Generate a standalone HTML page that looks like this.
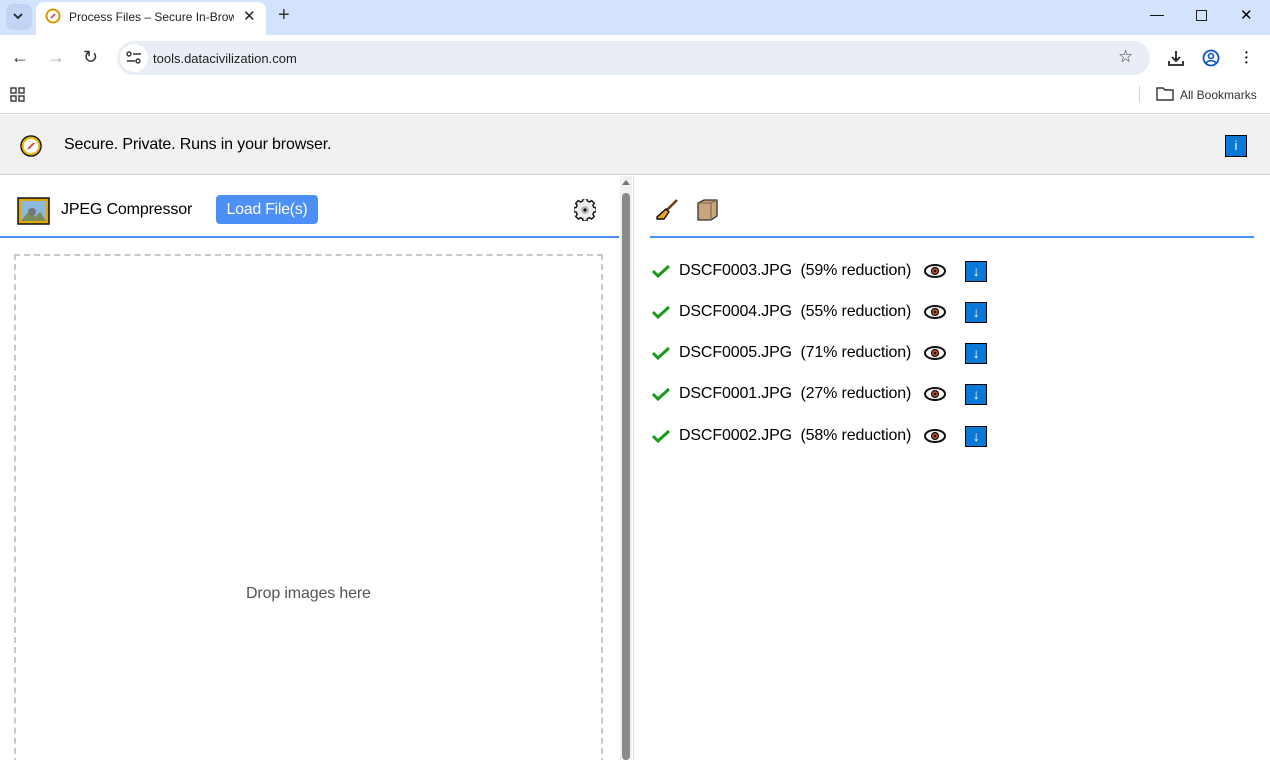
<!DOCTYPE html>
<html><head><meta charset="utf-8"><style>
*{box-sizing:border-box;margin:0;padding:0}
html,body{width:1270px;height:760px;overflow:hidden}
body{font-family:"Liberation Sans",Arial,sans-serif;background:#fff;position:relative}
.abs{position:absolute}
.tabbar{left:0;top:0;width:1270px;height:35px;background:#d3e3fd}
.tab{left:36px;top:2px;width:230px;height:33px;background:#fff;border-radius:8px 8px 0 0}
.toolbar{left:0;top:35px;width:1270px;height:45px;background:#fff}
.omni{left:117px;top:41px;width:1033px;height:34px;background:#e9eef6;border-radius:17px}
.bm{left:0;top:80px;width:1270px;height:34px;background:#fff;border-bottom:1px solid #d6d6d6}
.banner{left:0;top:115px;width:1270px;height:60px;background:#f1f1f1;border-bottom:1px solid #cfcfcf}
.fl{font-size:16px;color:#000}
.row{left:652px;height:24px;display:flex;align-items:center;font-size:16px;letter-spacing:-0.15px}
.dl{width:22px;height:21px;background:#0a78d7;border:1.5px solid #000;color:#fff;font-size:14px;text-align:center;line-height:18px;font-weight:bold}
</style></head><body>
<div class="abs tabbar"></div>
<div class="abs" style="left:6px;top:4px;width:26px;height:26px;background:#c2d4f3;border-radius:7px"></div>
<svg class="abs" style="left:12px;top:10px" width="12" height="12"><path d="M2 4l4 4 4-4" fill="none" stroke="#222" stroke-width="1.8"/></svg>
<div class="abs tab"></div>
<svg class="abs" style="left:45px;top:8px" width="16" height="16"><circle cx="8" cy="8" r="6.5" fill="#fff" stroke="#d49b00" stroke-width="2"/><path d="M6 10l4-4" stroke="#c33" stroke-width="1.5"/></svg>
<div class="abs" style="left:69px;top:10px;font-size:12px;color:#222;width:165px;overflow:hidden;white-space:nowrap">Process Files – Secure In-Browse</div>
<div class="abs" style="left:243px;top:7px;font-size:15px;color:#222">✕</div>
<div class="abs" style="left:278px;top:4px;font-size:20px;color:#333">+</div>
<div class="abs" style="left:1150px;top:6px;font-size:14px">—</div>
<div class="abs" style="left:1196px;top:10px;width:11px;height:11px;border:1.3px solid #222"></div>
<div class="abs" style="left:1240px;top:6px;font-size:15px">✕</div>
<div class="abs toolbar"></div>
<div class="abs" style="left:11px;top:47px;font-size:18px;color:#333">←</div>
<div class="abs" style="left:47px;top:47px;font-size:18px;color:#aaa">→</div>
<div class="abs" style="left:83px;top:47px;font-size:18px;color:#333">↻</div>
<div class="abs omni"></div>
<div class="abs" style="left:120px;top:44px;width:28px;height:28px;background:#fff;border-radius:14px"></div>
<svg class="abs" style="left:126px;top:51px" width="16" height="14"><circle cx="3" cy="3" r="2" fill="none" stroke="#333" stroke-width="1.4"/><path d="M7 3h8M1 10h8" stroke="#333" stroke-width="1.4"/><circle cx="12" cy="10" r="2" fill="none" stroke="#333" stroke-width="1.4"/></svg>
<div class="abs" style="left:153px;top:51px;font-size:13px;color:#1f1f1f">tools.datacivilization.com</div>
<div class="abs" style="left:1118px;top:47px;font-size:17px;color:#333">☆</div>
<svg class="abs" style="left:1167px;top:49px" width="18" height="18"><path d="M9 2v10M5 8l4 4 4-4M2 12v4h14v-4" fill="none" stroke="#222" stroke-width="1.8"/></svg>
<svg class="abs" style="left:1202px;top:49px" width="18" height="18"><circle cx="9" cy="9" r="7.5" fill="none" stroke="#0b57d0" stroke-width="1.8"/><circle cx="9" cy="7" r="2.5" fill="none" stroke="#0b57d0" stroke-width="1.6"/><path d="M4 14c2-3 8-3 10 0" fill="none" stroke="#0b57d0" stroke-width="1.6"/></svg>
<div class="abs" style="left:1245px;top:50px;width:3px;line-height:5px;font-size:8px">•<br>•<br>•</div>
<div class="abs bm"></div>
<svg class="abs" style="left:10px;top:87px" width="15" height="15"><g fill="none" stroke="#333" stroke-width="1.4"><rect x="1" y="1" width="5" height="5"/><rect x="9" y="1" width="5" height="5"/><rect x="1" y="9" width="5" height="5"/><rect x="9" y="9" width="5" height="5"/></g></svg>
<div class="abs" style="left:1139px;top:86px;width:1px;height:16px;background:#c4d3ee"></div>
<svg class="abs" style="left:1156px;top:87px" width="18" height="14"><path d="M1 1h6l2 2h8v10H1z" fill="none" stroke="#333" stroke-width="1.4"/></svg>
<div class="abs" style="left:1180px;top:88px;font-size:12px;color:#333">All Bookmarks</div>
<div class="abs banner"></div>
<svg class="abs" style="left:19px;top:134px" width="24" height="24"><circle cx="12" cy="12" r="10" fill="#fff" stroke="#111" stroke-width="1.5"/><circle cx="12" cy="12" r="8.3" fill="#fff" stroke="#e9b200" stroke-width="2"/><path d="M9 15l6-6" stroke="#d33" stroke-width="1.6"/></svg>
<div class="abs fl" style="left:64px;top:136px;letter-spacing:-0.15px">Secure. Private. Runs in your browser.</div>
<div class="abs" style="left:1225px;top:135px;width:22px;height:22px;background:#0a78d7;border:1.5px solid #000;color:#fff;font-size:13px;text-align:center;line-height:19px">i</div>
<svg class="abs" style="left:17px;top:197px" width="33" height="28"><rect x="1" y="1" width="31" height="26" fill="#e0a800" stroke="#111" stroke-width="1.5"/><rect x="4" y="4" width="25" height="20" fill="#8ab8de"/><path d="M4 24l8-10 6 6 5-5 6 9z" fill="#7a8c5a"/><circle cx="15" cy="15" r="4" fill="#777"/></svg>
<div class="abs" style="left:61px;top:201px;font-size:16px;letter-spacing:-0.15px">JPEG Compressor</div>
<div class="abs" style="left:216px;top:195px;width:102px;height:29px;background:#4b8ff7;border-radius:4px;color:#fff;font-size:16px;text-align:center;line-height:29px;letter-spacing:-0.3px">Load File(s)</div>
<svg class="abs" style="left:574px;top:199px" width="22" height="22" viewBox="-11 -11 22 22"><path d="M-2 -10h4l.5 2.6 2.3 1 2.2-1.5 2.8 2.8-1.5 2.2 1 2.3 2.6.5v4l-2.6.5-1 2.3 1.5 2.2-2.8 2.8-2.2-1.5-2.3 1-.5 2.6h-4l-.5-2.6-2.3-1-2.2 1.5-2.8-2.8 1.5-2.2-1-2.3-2.6-.5v-4l2.6-.5 1-2.3-1.5-2.2 2.8-2.8 2.2 1.5 2.3-1z" transform="translate(0 -2) scale(.95)" fill="#eee" stroke="#111" stroke-width="1.5"/><circle cy="0" r="4" fill="#bbb"/><circle r="1.6" fill="#111"/></svg>
<div class="abs" style="left:0;top:236px;width:619px;height:2px;background:#4b8ff7"></div>
<div class="abs" style="left:14px;top:254px;width:589px;height:520px;border:2px dashed #c8c8c8"></div>
<div class="abs" style="left:246px;top:585px;font-size:16px;color:#555;letter-spacing:-0.15px">Drop images here</div>
<div class="abs" style="left:620px;top:176px;width:12px;height:584px;background:#f1f1f1"></div>
<div class="abs" style="left:622px;top:180px;width:0;height:0;border-left:4px solid transparent;border-right:4px solid transparent;border-bottom:5px solid #777"></div>
<div class="abs" style="left:622px;top:193px;width:8px;height:567px;background:#8a8a8a;border-radius:4px"></div>
<div class="abs" style="left:633px;top:176px;width:1px;height:584px;background:#ddd"></div>
<svg class="abs" style="left:655px;top:198px" width="24" height="24"><path d="M22 2L11 13" stroke="#6b3a10" stroke-width="2.5"/><path d="M11 11l3 3-5 7-7 0 0-2z" fill="#f0a020" stroke="#111" stroke-width="1.4"/></svg>
<svg class="abs" style="left:696px;top:198px" width="24" height="24"><path d="M2 5l6-3h13v16l-6 4H2z" fill="#c9a57e" stroke="#333" stroke-width="1.3"/><path d="M2 5h13l6-3M15 5v17" fill="none" stroke="#8a6a48" stroke-width="1.2"/></svg>
<div class="abs" style="left:650px;top:236px;width:604px;height:2px;background:#4b8ff7"></div>
<div class="abs row" style="top:259px"><svg width="18" height="14" style="margin-right:9px"><path d="M1 7l5 5L17 2" fill="none" stroke="#1a9a1a" stroke-width="3"/></svg>DSCF0003.JPG&nbsp; (59% reduction)<svg width="24" height="16" style="margin-left:12px"><ellipse cx="12" cy="8" rx="10" ry="6" fill="#fff" stroke="#111" stroke-width="2"/><circle cx="12" cy="8" r="3.5" fill="#c8501e" stroke="#111" stroke-width="1.2"/><circle cx="12" cy="8" r="1.3" fill="#111"/></svg><div class="dl" style="margin-left:18px">↓</div></div>
<div class="abs row" style="top:300px"><svg width="18" height="14" style="margin-right:9px"><path d="M1 7l5 5L17 2" fill="none" stroke="#1a9a1a" stroke-width="3"/></svg>DSCF0004.JPG&nbsp; (55% reduction)<svg width="24" height="16" style="margin-left:12px"><ellipse cx="12" cy="8" rx="10" ry="6" fill="#fff" stroke="#111" stroke-width="2"/><circle cx="12" cy="8" r="3.5" fill="#c8501e" stroke="#111" stroke-width="1.2"/><circle cx="12" cy="8" r="1.3" fill="#111"/></svg><div class="dl" style="margin-left:18px">↓</div></div>
<div class="abs row" style="top:341px"><svg width="18" height="14" style="margin-right:9px"><path d="M1 7l5 5L17 2" fill="none" stroke="#1a9a1a" stroke-width="3"/></svg>DSCF0005.JPG&nbsp; (71% reduction)<svg width="24" height="16" style="margin-left:12px"><ellipse cx="12" cy="8" rx="10" ry="6" fill="#fff" stroke="#111" stroke-width="2"/><circle cx="12" cy="8" r="3.5" fill="#c8501e" stroke="#111" stroke-width="1.2"/><circle cx="12" cy="8" r="1.3" fill="#111"/></svg><div class="dl" style="margin-left:18px">↓</div></div>
<div class="abs row" style="top:382px"><svg width="18" height="14" style="margin-right:9px"><path d="M1 7l5 5L17 2" fill="none" stroke="#1a9a1a" stroke-width="3"/></svg>DSCF0001.JPG&nbsp; (27% reduction)<svg width="24" height="16" style="margin-left:12px"><ellipse cx="12" cy="8" rx="10" ry="6" fill="#fff" stroke="#111" stroke-width="2"/><circle cx="12" cy="8" r="3.5" fill="#c8501e" stroke="#111" stroke-width="1.2"/><circle cx="12" cy="8" r="1.3" fill="#111"/></svg><div class="dl" style="margin-left:18px">↓</div></div>
<div class="abs row" style="top:424px"><svg width="18" height="14" style="margin-right:9px"><path d="M1 7l5 5L17 2" fill="none" stroke="#1a9a1a" stroke-width="3"/></svg>DSCF0002.JPG&nbsp; (58% reduction)<svg width="24" height="16" style="margin-left:12px"><ellipse cx="12" cy="8" rx="10" ry="6" fill="#fff" stroke="#111" stroke-width="2"/><circle cx="12" cy="8" r="3.5" fill="#c8501e" stroke="#111" stroke-width="1.2"/><circle cx="12" cy="8" r="1.3" fill="#111"/></svg><div class="dl" style="margin-left:18px">↓</div></div>
</body></html>
